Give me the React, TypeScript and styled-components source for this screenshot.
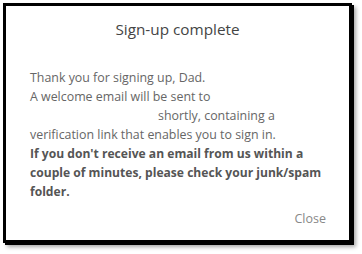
import React from 'react';
import styled, { createGlobalStyle } from 'styled-components';

const GlobalStyle = createGlobalStyle`
    html, body {
        margin: 0;
        padding: 0;
        background: #fff;
    }
    body {
        font-family: "Open Sans", "Noto Sans", Arial, sans-serif;
    }
`;

const Page = styled.div`
    width: 362px;
    height: 254px;
    padding: 3px;
    box-sizing: border-box;
`;

const Dialog = styled.div`
    width: 349px;
    height: 240px;
    box-sizing: border-box;
    border: 3px solid #000;
    background: #fff;
    box-shadow: 2px 2px 0 0 #000, 4px 4px 4px 0 rgba(0, 0, 0, 0.35);
    display: flex;
    flex-direction: column;
`;

const Title = styled.h4`
    margin: 0;
    padding: 13px 0 0;
    text-align: center;
    font-size: 15.3px;
    font-weight: 400;
    line-height: 20px;
    color: #444;
`;

const Body = styled.div`
    padding: 29px 20px 0 24px;
    font-size: 12.4px;
    line-height: 19px;
    color: #666;
`;

const Line = styled.div<{ $bold?: boolean }>`
    white-space: nowrap;
    font-weight: ${({ $bold }) => ($bold ? 700 : 400)};
    font-size: ${({ $bold }) => ($bold ? '12.1px' : '12.4px')};
    color: ${({ $bold }) => ($bold ? '#555' : '#666')};
`;

const Hidden = styled.span`
    display: inline-block;
    width: 128px;
`;

const Footer = styled.div`
    display: flex;
    justify-content: flex-end;
    padding: 8px 23px 0 0;
`;

const CloseBtn = styled.button`
    border: none;
    background: none;
    padding: 0;
    font-family: inherit;
    font-size: 12.5px;
    line-height: 19px;
    color: #888;
    cursor: pointer;
`;

const App = () => (
    <Page>
        <GlobalStyle />
        <Dialog>
            <Title>Sign-up complete</Title>
            <Body>
                <Line>Thank you for signing up, Dad.</Line>
                <Line>A welcome email will be sent to</Line>
                <Line><Hidden />shortly, containing a</Line>
                <Line>verification link that enables you to sign in.</Line>
                <Line $bold>If you don't receive an email from us within a</Line>
                <Line $bold>couple of minutes, please check your junk/spam</Line>
                <Line $bold>folder.</Line>
            </Body>
            <Footer>
                <CloseBtn>Close</CloseBtn>
            </Footer>
        </Dialog>
    </Page>
);

export default App;
